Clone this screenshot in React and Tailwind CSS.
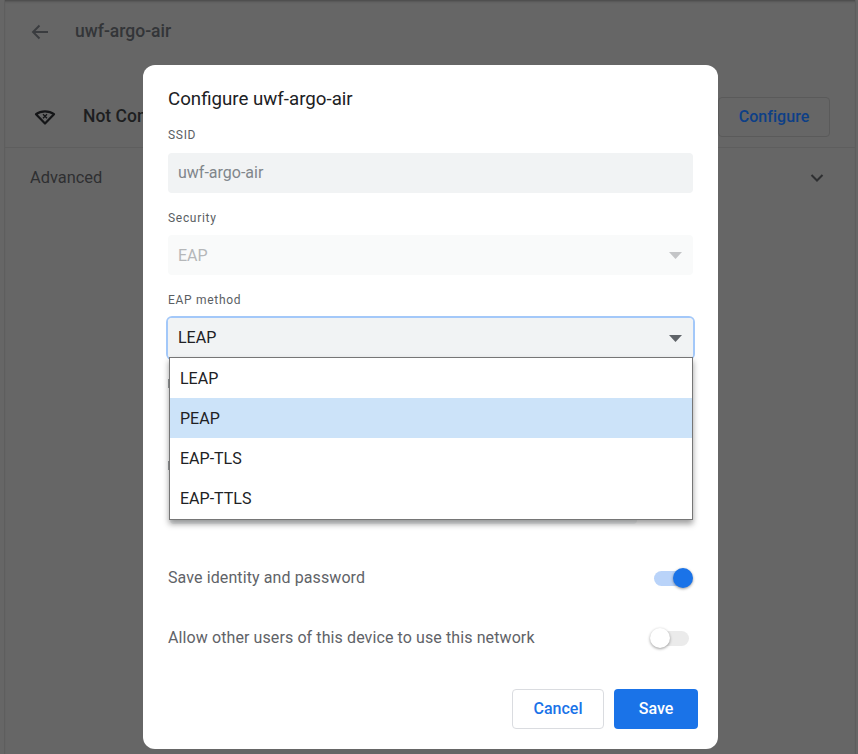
import React from "react";

function Label({ children, nudge }) {
  return <div className={`h-[20px] text-[12px] font-normal tracking-[0.7px] text-[#5a5e63] ${nudge ? "leading-[22px]" : "leading-[20px]"}`}>{children}</div>;
}

function Field({ children, color, arrow, bg = "bg-[#f1f3f4]", nudge }) {
  return (
    <div className={`flex h-[40px] items-center justify-between rounded-[4px] px-[10px] text-[16px] ${bg} ${color}`}>
      <span className={nudge ? "pt-[2px]" : ""}>{children}</span>
      {arrow && (
        <svg width="13" height="7" viewBox="0 0 13 7" className="mr-[1px]">
          <path d="M0 0h13L6.5 7z" fill={arrow} />
        </svg>
      )}
    </div>
  );
}

function Row({ children, on }) {
  return (
    <div className="flex h-[60px] items-center justify-between text-[16px] tracking-[0.1px] text-[#5f6368]">
      <span>{children}</span>
      {on ? (
        <span className="relative mr-[4px] block h-[15px] w-[35px] rounded-full bg-[#b9d3f9]">
          <span className="absolute right-[-4px] top-[-2.5px] block h-[20px] w-[20px] rounded-full bg-[#1a73e8] shadow-[0_1px_3px_rgba(0,0,0,0.4)]" />
        </span>
      ) : (
        <span className="relative mr-[4px] block h-[15px] w-[35px] rounded-full bg-[#ebebeb]">
          <span className="absolute left-[-4px] top-[-2.5px] block h-[20px] w-[20px] rounded-full bg-white shadow-[0_1px_3px_rgba(0,0,0,0.4)]" />
        </span>
      )}
    </div>
  );
}

export default function App() {
  return (
    <div className="relative h-[754px] w-[858px] overflow-hidden bg-[#666666] font-['Roboto',sans-serif]">
      {/* page behind the scrim */}
      <div className="ml-[4px] mr-[2px] h-full border-x border-[#5e5e5e] shadow-[inset_0_3px_3px_-2px_rgba(0,0,0,0.35)]">
        <div className="flex h-[62px] items-center pl-[25px] text-[17.5px] font-medium text-[#333538]">
          <svg width="20" height="20" viewBox="0 0 20 20" className="mt-[2px]" fill="none" stroke="#3a3c3f" strokeWidth="1.9">
            <path d="M18 10H3M9.500 3.500 3 10l6.500 6.500" />
          </svg>
          <span className="ml-[25px]">uwf-argo-air</span>
        </div>
        <div className="mt-[24px] flex h-[62px] items-center justify-between border-b border-[#5e5e5e] pl-[29px] pr-[25px]">
          <div className="flex items-center">
            <svg width="22" height="18" viewBox="0 0 22 18" fill="none" stroke="#141517" strokeWidth="2.200">
              <path d="M11 15.500 2 6.200C7 2.300 15 2.300 20 6.200z" strokeLinejoin="round" />
              <path d="m9 6.200 4 4m0-4-4 4" strokeWidth="1.300" />
            </svg>
            <span className="ml-[27px] text-[17.5px] font-medium text-[#1d1e20]">Not Connected</span>
          </div>
          <div className="flex h-[40px] w-[112px] items-center justify-center rounded-[4px] border border-[#5a5a5a] text-[16px] font-medium tracking-[0.05px] text-[#0d3f86]">
            Configure
          </div>
        </div>
        <div className="flex h-[60px] items-center justify-between pl-[25px] pr-[30px] text-[16.4px] text-[#2e2f31]">
          <span>Advanced</span>
          <svg width="16" height="10" viewBox="0 0 16 10" fill="none" stroke="#2e2f31" strokeWidth="2">
            <path d="m2.500 2 5.500 5.500L13.500 2" />
          </svg>
        </div>
      </div>

      {/* dialog */}
      <div className="absolute left-[143px] top-[65px] h-[684px] w-[575px] rounded-[12px] bg-white pl-[25px] pr-[25px]">
        <div className="flex h-[59px] items-center pt-[9px] text-[18.7px] text-[#202124]">Configure uwf-argo-air</div>
        <Label nudge>SSID</Label>
        <div className="mt-[9px]">
          <Field color="text-[#80868b]">uwf-argo-air</Field>
        </div>
        <div className="mt-[15px]"><Label>Security</Label></div>
        <div className="mt-[7px]">
          <Field color="text-[#b5b7b9]" arrow="#c4c5c7" bg="bg-[#f9fafa]" nudge>EAP</Field>
        </div>
        <div className="mt-[15px]"><Label>EAP method</Label></div>
        <div className="relative mt-[8px]">
          <div className="rounded-[4px] shadow-[0_0_0_2px_#a3c8f9]">
            <Field color="text-[#202124]" arrow="#5f6368">LEAP</Field>
          </div>
          {/* hidden form pieces under the list */}
          <div className="absolute left-0 top-[61px] h-[9px] w-[2px] bg-[#9a9da0]" />
          <div className="absolute left-0 top-[143px] h-[9px] w-[2px] bg-[#9a9da0]" />
          <div className="absolute left-[2px] top-[180px] h-[26px] w-[467px] rounded-[4px] bg-[#f1f3f4]" />
          {/* open list */}
          <div className="absolute left-[1px] top-[39px] z-10 w-[524px] border border-[#767676] bg-white text-[16px] text-[#202124] shadow-[0_4px_6px_rgba(0,0,0,0.38)]">
            <div className="flex h-[40px] items-center pl-[10px] pt-[1px]">LEAP</div>
            <div className="flex h-[40px] items-center bg-[#cce3f9] pl-[10px] pt-[1px]">PEAP</div>
            <div className="flex h-[40px] items-center pl-[10px] pt-[1px]">EAP-TLS</div>
            <div className="flex h-[41px] items-center pl-[10px]">EAP-TTLS</div>
          </div>
        </div>
        <div className="mt-[190px]">
          <Row on>Save identity and password</Row>
          <Row>Allow other users of this device to use this network</Row>
        </div>
        <div className="absolute bottom-[20px] right-[20px] flex gap-[10px]">
          <div className="flex h-[40px] w-[92px] items-center justify-center rounded-[4px] border border-[#dadce0] text-[16px] font-medium text-[#1a73e8]">Cancel</div>
          <div className="flex h-[40px] w-[84px] items-center justify-center rounded-[4px] bg-[#1a73e8] text-[16px] font-medium text-white">Save</div>
        </div>
      </div>
    </div>
  );
}
